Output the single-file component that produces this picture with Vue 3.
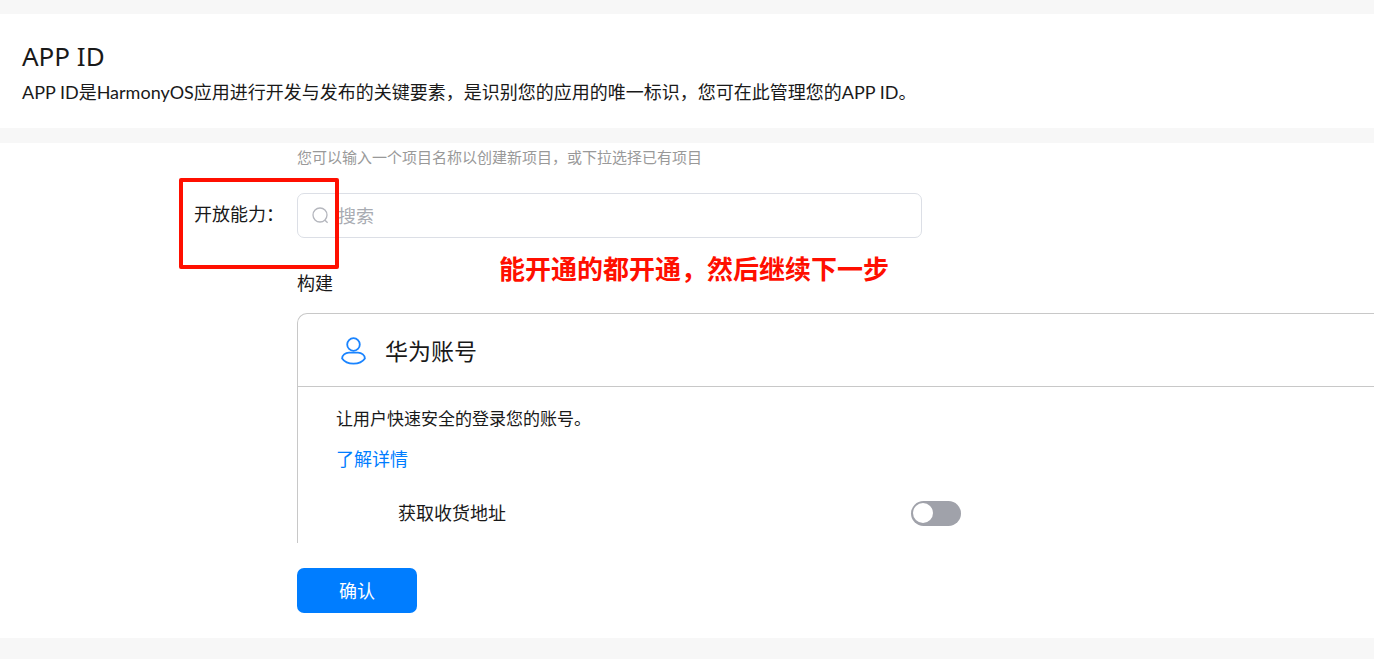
<script setup>
import { ref } from 'vue'

const keyword = ref('')
const addressEnabled = ref(false)
</script>

<template>
  <div class="page">
    <header class="intro">
      <h1>APP ID</h1>
      <p>APP ID是HarmonyOS应用进行开发与发布的关键要素，是识别您的应用的唯一标识，您可在此管理您的APP ID。</p>
    </header>

    <main class="panel">
      <p class="hint">您可以输入一个项目名称以创建新项目，或下拉选择已有项目</p>

      <div class="row">
        <div class="row-label">
          <label for="search">开放能力：</label>
          <span class="marker"></span>
        </div>
        <div class="search">
          <svg class="search-icon" viewBox="0 0 18 18" aria-hidden="true">
            <circle cx="8" cy="8" r="7" />
            <path d="M13 13.2 15.6 15.8" />
          </svg>
          <input id="search" v-model="keyword" type="text" placeholder="搜索" />
        </div>
      </div>

      <section class="group">
        <h2>构建</h2>
        <strong class="note">能开通的都开通，然后继续下一步</strong>

        <article class="card">
          <div class="card-head">
            <svg class="user-icon" viewBox="0 0 26 28" aria-hidden="true">
              <circle cx="12.500" cy="7.500" r="6.300" />
              <path d="M8 15.700H17C20.800 15.700 23.900 18.400 23.900 21.400C21.500 24.900 17.300 26.600 12.500 26.600S3.500 24.900 1.100 21.400C1.100 18.400 4.200 15.700 8 15.700Z" />
            </svg>
            <h3>华为账号</h3>
          </div>
          <div class="card-body">
            <p>让用户快速安全的登录您的账号。</p>
            <a href="#">了解详情</a>
            <div class="option">
              <label for="address">获取收货地址</label>
              <input id="address" v-model="addressEnabled" type="checkbox" role="switch" />
            </div>
          </div>
        </article>
      </section>

      <button class="confirm" type="button">确认</button>
    </main>
  </div>
</template>

<style>
body {
  margin: 0;
  background: #f7f7f7;
}
</style>

<style scoped>
.page {
  box-sizing: border-box;
  min-height: 100vh;
  padding: 14px 0 21px;
  background: #f7f7f7;
  color: #191919;
  font-family: "Noto Sans", "Noto Sans CJK SC", sans-serif;
  font-size: 18px;
  line-height: 26px;
  overflow: hidden;
}

h1,
h2,
h3,
p {
  margin: 0;
  font-weight: 400;
}

.intro {
  padding: 24px 22px 23px;
  background: #fff;
}

h1 {
  font-size: 26px;
  line-height: 36px;
}

.intro p {
  padding-top: 5px;
  font-family: Lato, "Noto Sans CJK SC", sans-serif;
}

.panel {
  margin-top: 15px;
  padding: 3px 0 25px 297px;
  background: #fff;
}

.hint {
  color: #999;
  font-size: 15px;
  line-height: 22px;
}

.row {
  display: grid;
  grid-template-columns: 103px minmax(0, 625px);
  margin: 25px 0 0 -103px;
}

.row-label {
  position: relative;
  padding-top: 8px;
}

.marker {
  position: absolute;
  z-index: 1;
  top: -15px;
  left: -15px;
  box-sizing: border-box;
  width: 160px;
  height: 91px;
  border: 4px solid #ff0f00;
  border-radius: 2px;
  pointer-events: none;
}

.search {
  display: flex;
  align-items: center;
  box-sizing: border-box;
  height: 45px;
  padding: 0 14px;
  gap: 8px;
  border: 1px solid #dcdfe6;
  border-radius: 7px;
}

.search-icon {
  width: 18px;
  height: 18px;
  fill: none;
  stroke: #b4b6bd;
  stroke-width: 1.3;
}

.search input {
  flex: 1;
  min-width: 0;
  padding: 0;
  border: 0;
  outline: 0;
  background: none;
  color: inherit;
  font: inherit;
}

.search input::placeholder {
  color: #a8abb2;
  opacity: 1;
}

.group {
  position: relative;
  padding-top: 32px;
}

.note {
  position: absolute;
  top: 13px;
  left: 202px;
  color: #ff0f00;
  font-size: 26px;
  font-weight: 700;
  line-height: 36px;
  white-space: nowrap;
}

h2 {
  font-size: 18px;
}

.card {
  margin-top: 17px;
  border: solid #c8c8c8;
  border-width: 1px 0 0 1px;
  border-radius: 10px 0 0 0;
}

.card-head {
  display: flex;
  align-items: center;
  height: 72px;
  padding: 0 43px;
  gap: 18px;
  border-bottom: 1px solid #c8c8c8;
}

.user-icon {
  width: 26px;
  height: 28px;
  padding-top: 2px;
  fill: none;
  stroke: #1a84ff;
  stroke-width: 1.8;
}

h3 {
  padding-top: 2px;
  font-size: 23px;
  line-height: 34px;
}

.card-body {
  padding: 19px 38px 17px;
}

.card-body p {
  font-size: 17px;
}

.card-body a {
  display: inline-block;
  margin-top: 14px;
  color: #007dff;
  text-decoration: none;
}

.option {
  display: grid;
  grid-template-columns: 513px 50px;
  align-items: center;
  margin-top: 28px;
  padding-left: 62px;
}

.option input {
  appearance: none;
  box-sizing: border-box;
  width: 50px;
  height: 25px;
  margin: 0;
  padding: 2px;
  border-radius: 13px;
  background: #a0a2aa;
}

.option input::before {
  content: "";
  display: block;
  width: 20px;
  height: 20px;
  border-radius: 50%;
  background: #fff;
}

.option input:checked {
  background: #007dff;
}

.option input:checked::before {
  margin-left: auto;
}

.confirm {
  display: block;
  width: 120px;
  height: 45px;
  margin-top: 25px;
  padding: 0;
  border: 0;
  border-radius: 7px;
  background: #007dff;
  color: #fff;
  font: inherit;
}
</style>
